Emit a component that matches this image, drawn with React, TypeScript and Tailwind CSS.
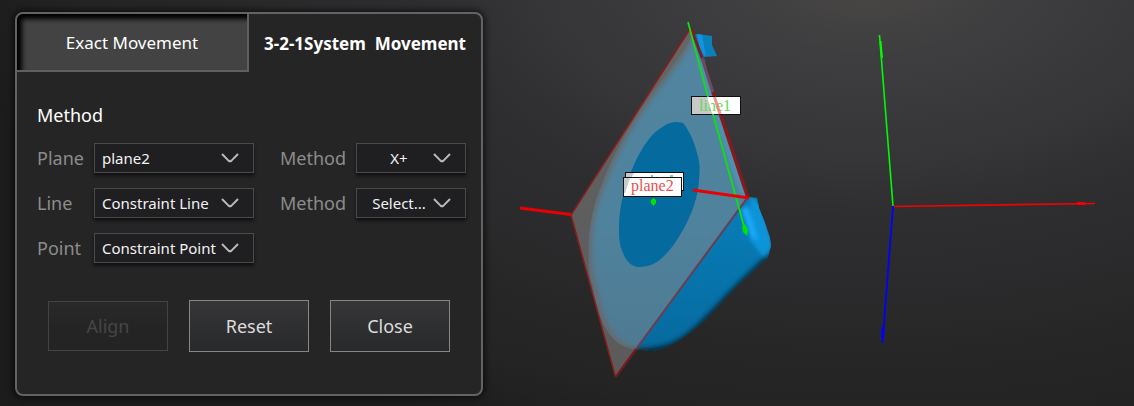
import { useState } from "react";

const METHOD_OPTIONS = ["X+", "X-", "Y+", "Y-", "Z+", "Z-"];

type PickerProps = {
  id: string;
  label: string;
  options: string[];
  centered?: boolean;
};

function Picker({ id, label, options, centered = false }: PickerProps) {
  return (
    <>
      <label htmlFor={id} className="text-lg text-[#8c8c8c]">
        {label}
      </label>
      <div className="relative">
        <select
          id={id}
          className={
            "block h-[30px] w-full appearance-none border border-[#4a4a4c] bg-[#1f1f21] text-[15px] text-[#f2f2f2] shadow-[0_3px_3px_rgba(0,0,0,0.55)] outline-none " +
            (centered ? "pr-6 text-center" : "pl-[7px] pr-7")
          }
        >
          {options.map((option) => (
            <option key={option}>{option}</option>
          ))}
        </select>
        <svg
          className="pointer-events-none absolute right-[15px] top-[10px] h-[10px] w-[18px]"
          viewBox="0 0 18 10"
          fill="none"
          stroke="#b9b9b9"
          strokeWidth="2"
          aria-hidden="true"
        >
          <path d="M1 1 L7.5 7.6 Q9 8.8 10.5 7.6 L17 1" />
        </svg>
      </div>
    </>
  );
}

function Viewport() {
  const body =
    "M697 34 L712 36 L712 45 L717 56 L704 57 L706 68 L724 122 L748 197 L757 198 L759 208 L765 223 L770 238 L771 246 L768 257 L733 290 L706 319 C692 332 681 340 670 345 C663 349 656 351 650 351 L643 350 C633 350 624 347 617 342 C611 337 607 331 603 323 C599 313 595 301 593 287 C589 275 588 264 589 257 C588 240 590 226 593 213 C595 203 598 195 601 187 C606 173 613 158 621 143 C628 130 636 117 645 104 C652 93 660 83 668 73 C676 61 684 51 690 40 L692 36 Z";
  const hole =
    "M683 123 C689 130 694 141 697 153 C700 162 700 170 699 180 C698 197 692 214 683 230 C675 244 667 255 657 262 C651 266 644 267 638 267 C631 266 626 261 623 253 C619 244 619 236 619 227 C619 206 625 185 633 167 C641 148 652 132 664 126 C670 122 676 121 683 123 Z";
  const plane = "M690 29 L571 215 L615.5 377 L748 197 Z";
  return (
    <svg viewBox="483 0 651 406" className="block h-auto w-full" role="img" aria-label="3D view">
      <defs>
        <linearGradient id="bodyFill" x1="0" y1="0" x2="0" y2="1">
          <stop offset="0" stopColor="#0a80bd" />
          <stop offset="0.6" stopColor="#087bb5" />
          <stop offset="1" stopColor="#066a9e" />
        </linearGradient>
        <clipPath id="bodyClip">
          <path d={body} />
        </clipPath>
        <filter id="soft" x="-30%" y="-30%" width="160%" height="160%">
          <feGaussianBlur stdDeviation="2.5" />
        </filter>
        <filter id="softer" x="-60%" y="-30%" width="220%" height="160%">
          <feGaussianBlur stdDeviation="2" />
        </filter>
      </defs>

      {/* scanned part */}
      <path d={body} fill="url(#bodyFill)" />
      <g clipPath="url(#bodyClip)">
        <path
          d="M690 36 C684 50 676 61 667 73 C641 107 633 120 620 143 C606 171 596 198 592 213 C586 240 588 270 593 287 C599 318 606 332 617 342 C630 353 645 353 655 353"
          fill="none"
          stroke="#3c454b"
          strokeWidth="7"
          filter="url(#soft)"
        />
        <path
          d="M625 353 C645 354 660 352 674 346 C690 339 704 324 735 291 L770 257"
          fill="none"
          stroke="#04293d"
          strokeWidth="8"
          filter="url(#soft)"
        />
        <path d="M750 196 L762 206 L772 245 L764 258 L750 240 Z" fill="#0994d8" filter="url(#softer)" />
        <path d="M741 209 L748 206 L758 240 L752 238 Z" fill="#1cabff" filter="url(#softer)" />
        <path d="M700 60 L737 175 L746 197" fill="none" stroke="#0b9be4" strokeWidth="7" filter="url(#softer)" />
        <path d="M697 34 L702 34 L706 57 L700 50 Z" fill="#0f95de" />
      </g>

      {/* fitted plane */}
      <path d={plane} fill="#8a8888" fillOpacity="0.55" />
      <path d={hole} fill="#056a9d" />
      <path d="M690 29 L571 215 L615.5 377" fill="none" stroke="#8a1c1c" strokeWidth="1.5" />
      <path d="M615.5 377 L748 197" fill="none" stroke="#6f3a50" strokeWidth="2" />
      <path d="M615.5 377 L636 349" fill="none" stroke="#7d1717" strokeWidth="2" />
      <path d="M691 28 L703 60" fill="none" stroke="#7d1c22" strokeWidth="3" />
      <path d="M702 58 L713 93" fill="none" stroke="#71485f" strokeWidth="3" />
      <path d="M713 92 L748 198" fill="none" stroke="#861a1d" strokeWidth="3.5" />

      {/* line label */}
      <rect x="691.5" y="96.5" width="49" height="18" fill="#ffffff" stroke="#111111" />
      <path d="M692 97 H708 L713 114 H692 Z" fill="#c9c9c9" />
      <text x="699" y="111" fontSize="16" fontFamily='"Liberation Serif", serif' fill="#62d862">
        line1
      </text>
      <path d="M714.5 97 L720 114" stroke="#f07c6c" strokeOpacity="0.8" strokeWidth="3" />

      <path d="M688 22 L708 97" stroke="#10e010" strokeWidth="1.8" />
      <path d="M708 97 L713 114" stroke="#ffffff" strokeWidth="1.6" />
      <path d="M713 114 L745 230" stroke="#10e010" strokeWidth="1.8" />
      <path d="M742 227 L745 224 L748 230 L747 236 L743 232 Z" fill="#00e400" />

      {/* stacked point and plane labels */}
      <rect x="625.5" y="172.5" width="58" height="18" fill="#ffffff" stroke="#111111" />
      <path d="M626 173 H634 L631 178 H626 Z" fill="#c9c9c9" />
      <path d="M651 176 h2 M670 176 h3" stroke="#4fd24f" strokeWidth="1.5" />
      <rect x="623.5" y="177.5" width="58" height="19" fill="#ffffff" stroke="#111111" />
      <path d="M624 178 H630 L625 193 H624 Z" fill="#c9c9c9" />
      <text x="631" y="191" fontSize="16" fontFamily='"Liberation Serif", serif' fill="#e65050">
        plane2
      </text>
      <path d="M653.5 198 L656 200 V203 L653.5 206 L651 203 V200 Z" fill="#00e400" />

      {/* plane normals */}
      <path d="M520 208 L571 214.5 M693 190 L749 198" stroke="#ea0000" strokeWidth="2.8" />

      {/* coordinate axes */}
      <path d="M879.5 35 L893 206" stroke="#00fa00" strokeWidth="1.6" />
      <path d="M880.5 41 L882 58" stroke="#00fa00" strokeWidth="2" />
      <path d="M893 206.5 L1095 203.5" stroke="#f50000" strokeWidth="1.6" />
      <path d="M1077 202 h8 v3 h-8 Z" fill="#f50000" />
      <path d="M893 206 L882.5 343" stroke="#0000ff" strokeWidth="1.8" />
      <path d="M883 327 L882.5 338" stroke="#0000ff" strokeWidth="3" />
    </svg>
  );
}

const TABS = ["Exact Movement", "3-2-1System  Movement"];

export default function App() {
  const [active, setActive] = useState(1);
  return (
    <main
      className="flex min-h-screen items-start bg-[#1b1b1c] bg-[radial-gradient(ellipse_850px_480px_at_870px_-30px,#4b4845_0%,#3e3e40_18%,#3a3a3c_28%,#353537_40%,#2e2e30_52%,#2b2b2d_66%,#262626_80%,#242424_92%,#1c1c1d_106%)] pl-[15px] text-white"
      style={{ fontFamily: '"Noto Sans", sans-serif' }}
    >
      <section className="mt-3 mb-[10px] w-[468px] shrink-0 overflow-hidden rounded-lg border-2 border-[#636363] bg-[#252525] shadow-[0_0_6px_2px_rgba(0,0,0,0.6)]">
        <div role="tablist" className="grid grid-cols-2">
          {TABS.map((tab, index) => (
            <button
              key={tab}
              type="button"
              role="tab"
              aria-selected={active === index}
              onClick={() => setActive(index)}
              className={
                "h-[58px] whitespace-pre pt-[2px] text-[17px] " +
                (active === index
                  ? "font-bold"
                  : "border-r-2 border-b-2 border-[#606060] bg-[#434343] shadow-[inset_5px_5px_5px_#000000]")
              }
            >
              {tab}
            </button>
          ))}
        </div>

        <form className="px-5 pt-[30px] pb-[42px]" onSubmit={(event) => event.preventDefault()}>
          <h2 className="text-lg leading-[26px]">Method</h2>
          <div className="mt-[15px] grid grid-cols-[57px_160px_26px_76px_110px] items-center gap-y-[15px]">
            <Picker id="plane" label="Plane" options={["plane2", "plane1"]} />
            <span />
            <Picker id="plane-method" label="Method" options={METHOD_OPTIONS} centered />
            <Picker id="line" label="Line" options={["Constraint Line", "line1"]} />
            <span />
            <Picker id="line-method" label="Method" options={["Select...", ...METHOD_OPTIONS]} centered />
            <Picker id="point" label="Point" options={["Constraint Point", "point1"]} />
          </div>

          <div className="mt-[37px] flex items-center justify-center gap-[21px] text-lg">
            <button
              type="button"
              disabled
              className="h-[50px] w-[120px] border border-[#434343] bg-linear-to-b from-[#29292b] to-[#242424] to-60% text-[#464646]"
            >
              Align
            </button>
            <button
              type="button"
              className="h-[52px] w-[120px] border border-[#868686] bg-linear-to-b from-[#363638] to-[#28292b] text-[#dcdcdc]"
            >
              Reset
            </button>
            <button
              type="button"
              className="h-[52px] w-[120px] border border-[#868686] bg-linear-to-b from-[#363638] to-[#28292b] text-[#dcdcdc]"
            >
              Close
            </button>
          </div>
        </form>
      </section>

      <div className="min-w-0 flex-1">
        <Viewport />
      </div>
    </main>
  );
}
